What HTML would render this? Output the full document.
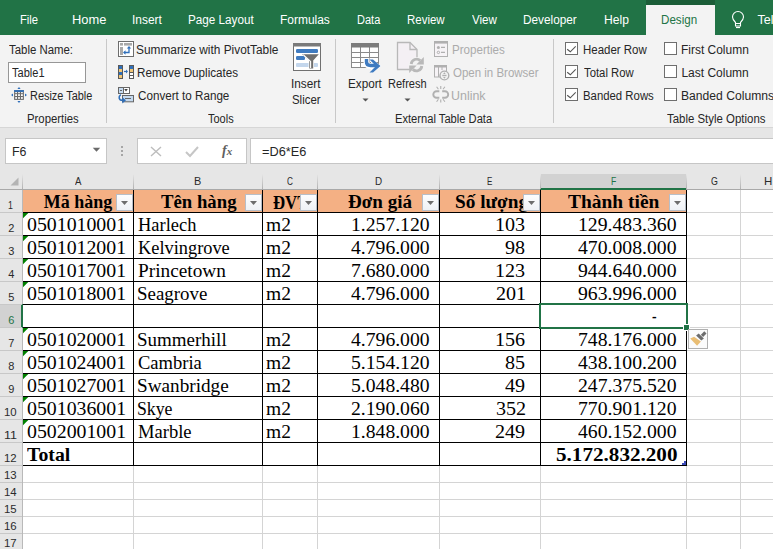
<!DOCTYPE html>
<html><head><meta charset="utf-8">
<style>
html,body{margin:0;padding:0;width:773px;height:549px;overflow:hidden;background:#fff}
body{position:relative}
.a{position:absolute;box-sizing:content-box}
.tx{position:absolute;white-space:pre;line-height:30px;transform-origin:0 0}
svg{position:absolute;overflow:visible}
</style></head><body>
<div class='a' style='left:0px;top:0px;width:773px;height:35px;background:#217346'></div>
<div class='a' style='left:646px;top:0px;width:69px;height:5px;background:#1b5d38'></div>
<div class='a' style='left:646px;top:5px;width:69px;height:30px;background:#f3f3f3'></div>
<div class='a' style='left:0px;top:35px;width:773px;height:92px;background:#f3f3f3'></div>
<div class='a' style='left:0px;top:127px;width:773px;height:1px;background:#d6d6d6'></div>
<div class='a' style='left:106px;top:39px;width:1px;height:84px;background:#c8c8c8'></div>
<div class='a' style='left:335px;top:39px;width:1px;height:84px;background:#c8c8c8'></div>
<div class='a' style='left:553px;top:39px;width:1px;height:84px;background:#c8c8c8'></div>
<div class='a' style='left:8px;top:62px;width:76px;height:19px;background:#fff;border:1px solid #979797'></div>
<div class='a' style='left:0px;top:128px;width:773px;height:46px;background:#e6e6e6'></div>
<div class='a' style='left:5px;top:138px;width:100px;height:24px;background:#fff;border:1px solid #c6c6c6'></div>
<div class='a' style='left:137px;top:138px;width:108px;height:24px;background:#fff;border:1px solid #c6c6c6'></div>
<div class='a' style='left:250px;top:138px;width:530px;height:24px;background:#fff;border:1px solid #c6c6c6'></div>
<div class='a' style='left:0px;top:174px;width:773px;height:15px;background:#e6e6e6'></div>
<div class='a' style='left:0px;top:189px;width:773px;height:1px;background:#a9a9a9'></div>
<div class='a' style='left:540px;top:174px;width:146px;height:14px;background:#d2d2d2'></div>
<div class='a' style='left:540px;top:188px;width:146px;height:2px;background:#217346'></div>
<div class='a' style='left:133px;top:174px;width:1px;height:15px;background:linear-gradient(#e6e6e6,#b0b0b0)'></div>
<div class='a' style='left:262px;top:174px;width:1px;height:15px;background:linear-gradient(#e6e6e6,#b0b0b0)'></div>
<div class='a' style='left:317px;top:174px;width:1px;height:15px;background:linear-gradient(#e6e6e6,#b0b0b0)'></div>
<div class='a' style='left:439px;top:174px;width:1px;height:15px;background:linear-gradient(#e6e6e6,#b0b0b0)'></div>
<div class='a' style='left:540px;top:174px;width:1px;height:15px;background:linear-gradient(#e6e6e6,#b0b0b0)'></div>
<div class='a' style='left:686px;top:174px;width:1px;height:15px;background:linear-gradient(#e6e6e6,#b0b0b0)'></div>
<div class='a' style='left:740px;top:174px;width:1px;height:15px;background:linear-gradient(#e6e6e6,#b0b0b0)'></div>
<div class='a' style='left:0px;top:190px;width:22px;height:359px;background:#e6e6e6'></div>
<div class='a' style='left:22px;top:190px;width:1px;height:359px;background:#b9b9b9'></div>
<div class='a' style='left:0px;top:305px;width:21px;height:22px;background:#d2d2d2'></div>
<div class='a' style='left:21px;top:304px;width:2px;height:24px;background:#217346'></div>
<div class='a' style='left:0px;top:212px;width:22px;height:1px;background:#c8c8c8'></div>
<div class='a' style='left:0px;top:235px;width:22px;height:1px;background:#c8c8c8'></div>
<div class='a' style='left:0px;top:258px;width:22px;height:1px;background:#c8c8c8'></div>
<div class='a' style='left:0px;top:281px;width:22px;height:1px;background:#c8c8c8'></div>
<div class='a' style='left:0px;top:304px;width:22px;height:1px;background:#c8c8c8'></div>
<div class='a' style='left:0px;top:327px;width:22px;height:1px;background:#c8c8c8'></div>
<div class='a' style='left:0px;top:350px;width:22px;height:1px;background:#c8c8c8'></div>
<div class='a' style='left:0px;top:373px;width:22px;height:1px;background:#c8c8c8'></div>
<div class='a' style='left:0px;top:396px;width:22px;height:1px;background:#c8c8c8'></div>
<div class='a' style='left:0px;top:419px;width:22px;height:1px;background:#c8c8c8'></div>
<div class='a' style='left:0px;top:442px;width:22px;height:1px;background:#c8c8c8'></div>
<div class='a' style='left:0px;top:465px;width:22px;height:1px;background:#c8c8c8'></div>
<div class='a' style='left:0px;top:482px;width:22px;height:1px;background:#c8c8c8'></div>
<div class='a' style='left:0px;top:499px;width:22px;height:1px;background:#c8c8c8'></div>
<div class='a' style='left:0px;top:516px;width:22px;height:1px;background:#c8c8c8'></div>
<div class='a' style='left:0px;top:533px;width:22px;height:1px;background:#c8c8c8'></div>
<div class='a' style='left:23px;top:190px;width:750px;height:359px;background:#fff'></div>
<div class='a' style='left:687px;top:212px;width:86px;height:1px;background:#d4d4d4'></div>
<div class='a' style='left:687px;top:235px;width:86px;height:1px;background:#d4d4d4'></div>
<div class='a' style='left:687px;top:258px;width:86px;height:1px;background:#d4d4d4'></div>
<div class='a' style='left:687px;top:281px;width:86px;height:1px;background:#d4d4d4'></div>
<div class='a' style='left:687px;top:304px;width:86px;height:1px;background:#d4d4d4'></div>
<div class='a' style='left:687px;top:327px;width:86px;height:1px;background:#d4d4d4'></div>
<div class='a' style='left:687px;top:350px;width:86px;height:1px;background:#d4d4d4'></div>
<div class='a' style='left:687px;top:373px;width:86px;height:1px;background:#d4d4d4'></div>
<div class='a' style='left:687px;top:396px;width:86px;height:1px;background:#d4d4d4'></div>
<div class='a' style='left:687px;top:419px;width:86px;height:1px;background:#d4d4d4'></div>
<div class='a' style='left:687px;top:442px;width:86px;height:1px;background:#d4d4d4'></div>
<div class='a' style='left:687px;top:465px;width:86px;height:1px;background:#d4d4d4'></div>
<div class='a' style='left:687px;top:482px;width:86px;height:1px;background:#d4d4d4'></div>
<div class='a' style='left:687px;top:499px;width:86px;height:1px;background:#d4d4d4'></div>
<div class='a' style='left:687px;top:516px;width:86px;height:1px;background:#d4d4d4'></div>
<div class='a' style='left:687px;top:533px;width:86px;height:1px;background:#d4d4d4'></div>
<div class='a' style='left:686px;top:465px;width:1px;height:84px;background:#d4d4d4'></div>
<div class='a' style='left:740px;top:465px;width:1px;height:84px;background:#d4d4d4'></div>
<div class='a' style='left:740px;top:190px;width:1px;height:275px;background:#d4d4d4'></div>
<div class='a' style='left:133px;top:466px;width:1px;height:83px;background:#d4d4d4'></div>
<div class='a' style='left:262px;top:466px;width:1px;height:83px;background:#d4d4d4'></div>
<div class='a' style='left:317px;top:466px;width:1px;height:83px;background:#d4d4d4'></div>
<div class='a' style='left:439px;top:466px;width:1px;height:83px;background:#d4d4d4'></div>
<div class='a' style='left:540px;top:466px;width:1px;height:83px;background:#d4d4d4'></div>
<div class='a' style='left:23px;top:482px;width:664px;height:1px;background:#d4d4d4'></div>
<div class='a' style='left:23px;top:499px;width:664px;height:1px;background:#d4d4d4'></div>
<div class='a' style='left:23px;top:516px;width:664px;height:1px;background:#d4d4d4'></div>
<div class='a' style='left:23px;top:533px;width:664px;height:1px;background:#d4d4d4'></div>
<div class='a' style='left:23px;top:190px;width:663px;height:22px;background:#f4b084'></div>
<div class='a' style='left:133px;top:190px;width:1px;height:276px;background:#000'></div>
<div class='a' style='left:262px;top:190px;width:1px;height:276px;background:#000'></div>
<div class='a' style='left:317px;top:190px;width:1px;height:276px;background:#000'></div>
<div class='a' style='left:439px;top:190px;width:1px;height:276px;background:#000'></div>
<div class='a' style='left:540px;top:190px;width:1px;height:276px;background:#000'></div>
<div class='a' style='left:686px;top:190px;width:1px;height:276px;background:#000'></div>
<div class='a' style='left:23px;top:212px;width:664px;height:1px;background:#000'></div>
<div class='a' style='left:23px;top:235px;width:664px;height:1px;background:#000'></div>
<div class='a' style='left:23px;top:258px;width:664px;height:1px;background:#000'></div>
<div class='a' style='left:23px;top:281px;width:664px;height:1px;background:#000'></div>
<div class='a' style='left:23px;top:304px;width:664px;height:1px;background:#000'></div>
<div class='a' style='left:23px;top:327px;width:664px;height:1px;background:#000'></div>
<div class='a' style='left:23px;top:350px;width:664px;height:1px;background:#000'></div>
<div class='a' style='left:23px;top:373px;width:664px;height:1px;background:#000'></div>
<div class='a' style='left:23px;top:396px;width:664px;height:1px;background:#000'></div>
<div class='a' style='left:23px;top:419px;width:664px;height:1px;background:#000'></div>
<div class='a' style='left:23px;top:442px;width:664px;height:1px;background:#000'></div>
<div class='a' style='left:23px;top:465px;width:664px;height:1px;background:#000'></div>
<div class='tx' style='left:20.00px;top:5.00px;font-family:"Liberation Sans";font-size:12.5px;font-weight:400;color:#ffffff;transform:scaleX(0.9000);'>File</div>
<div class='tx' style='left:72.27px;top:5.00px;font-family:"Liberation Sans";font-size:12.5px;font-weight:400;color:#ffffff;transform:scaleX(1.0312);'>Home</div>
<div class='tx' style='left:132.25px;top:5.00px;font-family:"Liberation Sans";font-size:12.5px;font-weight:400;color:#ffffff;transform:scaleX(0.9533);'>Insert</div>
<div class='tx' style='left:188.46px;top:5.00px;font-family:"Liberation Sans";font-size:12.5px;font-weight:400;color:#ffffff;transform:scaleX(0.9362);'>Page Layout</div>
<div class='tx' style='left:280.24px;top:5.00px;font-family:"Liberation Sans";font-size:12.5px;font-weight:400;color:#ffffff;transform:scaleX(0.9569);'>Formulas</div>
<div class='tx' style='left:356.62px;top:5.00px;font-family:"Liberation Sans";font-size:12.5px;font-weight:400;color:#ffffff;transform:scaleX(0.8808);'>Data</div>
<div class='tx' style='left:407.38px;top:5.00px;font-family:"Liberation Sans";font-size:12.5px;font-weight:400;color:#ffffff;transform:scaleX(0.9175);'>Review</div>
<div class='tx' style='left:472.00px;top:5.00px;font-family:"Liberation Sans";font-size:12.5px;font-weight:400;color:#ffffff;transform:scaleX(0.9259);'>View</div>
<div class='tx' style='left:523.16px;top:5.00px;font-family:"Liberation Sans";font-size:12.5px;font-weight:400;color:#ffffff;transform:scaleX(0.9429);'>Developer</div>
<div class='tx' style='left:603.53px;top:5.00px;font-family:"Liberation Sans";font-size:12.5px;font-weight:400;color:#ffffff;transform:scaleX(0.9680);'>Help</div>
<div class='tx' style='left:661.07px;top:5.00px;font-family:"Liberation Sans";font-size:12.5px;font-weight:400;color:#217346;transform:scaleX(0.9289);'>Design</div>
<div class='tx' style='left:757.60px;top:5.00px;font-family:"Liberation Sans";font-size:12.5px;font-weight:400;color:#ffffff;'>Tel</div>
<div class='tx' style='left:8.60px;top:34.70px;font-family:"Liberation Sans";font-size:12px;font-weight:400;color:#262626;transform:scaleX(0.9507);'>Table Name:</div>
<div class='tx' style='left:11.80px;top:57.90px;font-family:"Liberation Sans";font-size:12px;font-weight:400;color:#262626;transform:scaleX(0.9200);'>Table1</div>
<div class='tx' style='left:29.89px;top:80.90px;font-family:"Liberation Sans";font-size:12px;font-weight:400;color:#262626;transform:scaleX(0.9090);'>Resize Table</div>
<div class='tx' style='left:26.56px;top:103.80px;font-family:"Liberation Sans";font-size:12px;font-weight:400;color:#262626;transform:scaleX(0.9444);'>Properties</div>
<div class='tx' style='left:136.41px;top:35.00px;font-family:"Liberation Sans";font-size:12px;font-weight:400;color:#262626;transform:scaleX(0.9888);'>Summarize with PivotTable</div>
<div class='tx' style='left:136.63px;top:57.80px;font-family:"Liberation Sans";font-size:12px;font-weight:400;color:#262626;transform:scaleX(0.9718);'>Remove Duplicates</div>
<div class='tx' style='left:137.60px;top:80.60px;font-family:"Liberation Sans";font-size:12px;font-weight:400;color:#262626;transform:scaleX(0.9713);'>Convert to Range</div>
<div class='tx' style='left:207.60px;top:103.60px;font-family:"Liberation Sans";font-size:12px;font-weight:400;color:#262626;transform:scaleX(0.9143);'>Tools</div>
<div class='tx' style='left:291.42px;top:68.90px;font-family:"Liberation Sans";font-size:12px;font-weight:400;color:#262626;transform:scaleX(0.9828);'>Insert</div>
<div class='tx' style='left:292.35px;top:84.80px;font-family:"Liberation Sans";font-size:12px;font-weight:400;color:#262626;transform:scaleX(0.9517);'>Slicer</div>
<div class='tx' style='left:347.52px;top:68.80px;font-family:"Liberation Sans";font-size:12px;font-weight:400;color:#262626;transform:scaleX(0.9765);'>Export</div>
<div class='tx' style='left:387.68px;top:68.80px;font-family:"Liberation Sans";font-size:12px;font-weight:400;color:#262626;transform:scaleX(0.9195);'>Refresh</div>
<div class='tx' style='left:451.53px;top:35.00px;font-family:"Liberation Sans";font-size:12px;font-weight:400;color:#ababab;transform:scaleX(0.9667);'>Properties</div>
<div class='tx' style='left:452.50px;top:58.00px;font-family:"Liberation Sans";font-size:12px;font-weight:400;color:#ababab;transform:scaleX(0.9567);'>Open in Browser</div>
<div class='tx' style='left:451.46px;top:81.00px;font-family:"Liberation Sans";font-size:12px;font-weight:400;color:#ababab;transform:scaleX(1.0375);'>Unlink</div>
<div class='tx' style='left:394.67px;top:103.80px;font-family:"Liberation Sans";font-size:12px;font-weight:400;color:#262626;transform:scaleX(0.9298);'>External Table Data</div>
<div class='tx' style='left:582.84px;top:34.70px;font-family:"Liberation Sans";font-size:12px;font-weight:400;color:#262626;transform:scaleX(0.9561);'>Header Row</div>
<div class='tx' style='left:583.80px;top:58.00px;font-family:"Liberation Sans";font-size:12px;font-weight:400;color:#262626;transform:scaleX(0.9434);'>Total Row</div>
<div class='tx' style='left:582.85px;top:81.00px;font-family:"Liberation Sans";font-size:12px;font-weight:400;color:#262626;transform:scaleX(0.9473);'>Banded Rows</div>
<div class='tx' style='left:681.40px;top:34.70px;font-family:"Liberation Sans";font-size:12px;font-weight:400;color:#262626;transform:scaleX(0.9970);'>First Column</div>
<div class='tx' style='left:681.40px;top:58.00px;font-family:"Liberation Sans";font-size:12px;font-weight:400;color:#262626;'>Last Column</div>
<div class='tx' style='left:681.39px;top:81.00px;font-family:"Liberation Sans";font-size:12px;font-weight:400;color:#262626;transform:scaleX(1.0110);'>Banded Columns</div>
<div class='tx' style='left:667.30px;top:103.80px;font-family:"Liberation Sans";font-size:12px;font-weight:400;color:#262626;transform:scaleX(0.9524);'>Table Style Options</div>
<div class='tx' style='left:11.57px;top:136.80px;font-family:"Liberation Sans";font-size:12px;font-weight:400;color:#262626;transform:scaleX(1.0308);'>F6</div>
<div class='tx' style='left:262.10px;top:136.80px;font-family:"Liberation Sans";font-size:12px;font-weight:400;color:#262626;transform:scaleX(1.0610);'>=D6*E6</div>
<div class='tx' style='left:75.20px;top:165.70px;font-family:"Liberation Sans";font-size:11.5px;font-weight:400;color:#2b2b2b;transform:scaleX(0.8375);'>A</div>
<div class='tx' style='left:194.45px;top:165.70px;font-family:"Liberation Sans";font-size:11.5px;font-weight:400;color:#2b2b2b;transform:scaleX(0.9500);'>B</div>
<div class='tx' style='left:287.30px;top:165.70px;font-family:"Liberation Sans";font-size:11.5px;font-weight:400;color:#2b2b2b;transform:scaleX(0.7125);'>C</div>
<div class='tx' style='left:375.14px;top:165.70px;font-family:"Liberation Sans";font-size:11.5px;font-weight:400;color:#2b2b2b;transform:scaleX(0.8571);'>D</div>
<div class='tx' style='left:487.20px;top:165.70px;font-family:"Liberation Sans";font-size:11.5px;font-weight:400;color:#2b2b2b;transform:scaleX(0.7000);'>E</div>
<div class='tx' style='left:710.70px;top:165.70px;font-family:"Liberation Sans";font-size:11.5px;font-weight:400;color:#2b2b2b;transform:scaleX(0.7667);'>G</div>
<div class='tx' style='left:610.75px;top:165.70px;font-family:"Liberation Sans";font-size:11.5px;font-weight:400;color:#217346;transform:scaleX(0.7500);'>F</div>
<div class='tx' style='left:764.00px;top:165.70px;font-family:"Liberation Sans";font-size:11.5px;font-weight:400;color:#2b2b2b;'>H</div>
<div class='tx' style='left:8.30px;top:189.60px;font-family:"Liberation Sans";font-size:11px;font-weight:400;color:#2b2b2b;transform:scaleX(0.8000);'>1</div>
<div class='tx' style='left:8.20px;top:212.60px;font-family:"Liberation Sans";font-size:11px;font-weight:400;color:#2b2b2b;'>2</div>
<div class='tx' style='left:8.20px;top:235.60px;font-family:"Liberation Sans";font-size:11px;font-weight:400;color:#2b2b2b;'>3</div>
<div class='tx' style='left:8.20px;top:258.60px;font-family:"Liberation Sans";font-size:11px;font-weight:400;color:#2b2b2b;'>4</div>
<div class='tx' style='left:8.20px;top:281.60px;font-family:"Liberation Sans";font-size:11px;font-weight:400;color:#2b2b2b;'>5</div>
<div class='tx' style='left:8.20px;top:304.60px;font-family:"Liberation Sans";font-size:11px;font-weight:400;color:#217346;'>6</div>
<div class='tx' style='left:8.20px;top:327.60px;font-family:"Liberation Sans";font-size:11px;font-weight:400;color:#2b2b2b;'>7</div>
<div class='tx' style='left:8.20px;top:350.60px;font-family:"Liberation Sans";font-size:11px;font-weight:400;color:#2b2b2b;'>8</div>
<div class='tx' style='left:8.20px;top:373.60px;font-family:"Liberation Sans";font-size:11px;font-weight:400;color:#2b2b2b;'>9</div>
<div class='tx' style='left:4.46px;top:396.60px;font-family:"Liberation Sans";font-size:11px;font-weight:400;color:#2b2b2b;transform:scaleX(1.0364);'>10</div>
<div class='tx' style='left:4.36px;top:419.60px;font-family:"Liberation Sans";font-size:11px;font-weight:400;color:#2b2b2b;transform:scaleX(1.1400);'>11</div>
<div class='tx' style='left:4.46px;top:442.60px;font-family:"Liberation Sans";font-size:11px;font-weight:400;color:#2b2b2b;transform:scaleX(1.0364);'>12</div>
<div class='tx' style='left:4.46px;top:459.70px;font-family:"Liberation Sans";font-size:11px;font-weight:400;color:#2b2b2b;transform:scaleX(1.0364);'>13</div>
<div class='tx' style='left:4.46px;top:476.70px;font-family:"Liberation Sans";font-size:11px;font-weight:400;color:#2b2b2b;transform:scaleX(1.0364);'>14</div>
<div class='tx' style='left:4.46px;top:493.70px;font-family:"Liberation Sans";font-size:11px;font-weight:400;color:#2b2b2b;transform:scaleX(1.0364);'>15</div>
<div class='tx' style='left:4.46px;top:510.70px;font-family:"Liberation Sans";font-size:11px;font-weight:400;color:#2b2b2b;transform:scaleX(1.0364);'>16</div>
<div class='tx' style='left:4.46px;top:527.70px;font-family:"Liberation Sans";font-size:11px;font-weight:400;color:#2b2b2b;transform:scaleX(1.0364);'>17</div>
<div class='tx' style='left:43.70px;top:186.90px;font-family:"Liberation Serif";font-size:18px;font-weight:700;color:#000;'>Mã hàng</div>
<div class='tx' style='left:160.70px;top:186.90px;font-family:"Liberation Serif";font-size:18px;font-weight:700;color:#000;transform:scaleX(1.0411);'>Tên hàng</div>
<div class='tx' style='left:272.90px;top:187.50px;font-family:"Liberation Serif";font-size:18px;font-weight:700;color:#000;transform:scaleX(0.93);'>ĐVT</div>
<div class='tx' style='left:348.40px;top:186.90px;font-family:"Liberation Serif";font-size:18px;font-weight:700;color:#000;transform:scaleX(1.0583);'>Đơn giá</div>
<div class='tx' style='left:454.50px;top:186.90px;font-family:"Liberation Serif";font-size:18px;font-weight:700;color:#000;transform:scaleX(1.07);'>Số lượng</div>
<div class='tx' style='left:567.80px;top:186.90px;font-family:"Liberation Serif";font-size:18px;font-weight:700;color:#000;transform:scaleX(1.0810);'>Thành tiền</div>
<div class='tx' style='left:26.50px;top:209.80px;font-family:"Liberation Serif";font-size:18px;font-weight:400;color:#000;transform:scaleX(1.1011);'>0501010001</div>
<div class='tx' style='left:137.70px;top:209.80px;font-family:"Liberation Serif";font-size:18px;font-weight:400;color:#000;transform:scaleX(1.0246);'>Harlech</div>
<div class='tx' style='left:266.30px;top:209.80px;font-family:"Liberation Serif";font-size:18px;font-weight:400;color:#000;transform:scaleX(1.0818);'>m2</div>
<div class='tx' style='left:350.72px;top:209.80px;font-family:"Liberation Serif";font-size:18px;font-weight:400;color:#000;transform:scaleX(1.0914);'>1.257.120</div>
<div class='tx' style='left:494.87px;top:209.80px;font-family:"Liberation Serif";font-size:18px;font-weight:400;color:#000;transform:scaleX(1.1160);'>103</div>
<div class='tx' style='left:577.91px;top:209.80px;font-family:"Liberation Serif";font-size:18px;font-weight:400;color:#000;transform:scaleX(1.0943);'>129.483.360</div>
<div class='tx' style='left:26.50px;top:232.80px;font-family:"Liberation Serif";font-size:18px;font-weight:400;color:#000;transform:scaleX(1.1011);'>0501012001</div>
<div class='tx' style='left:137.70px;top:232.80px;font-family:"Liberation Serif";font-size:18px;font-weight:400;color:#000;transform:scaleX(1.0200);'>Kelvingrove</div>
<div class='tx' style='left:266.30px;top:232.80px;font-family:"Liberation Serif";font-size:18px;font-weight:400;color:#000;transform:scaleX(1.0818);'>m2</div>
<div class='tx' style='left:350.72px;top:232.80px;font-family:"Liberation Serif";font-size:18px;font-weight:400;color:#000;transform:scaleX(1.0914);'>4.796.000</div>
<div class='tx' style='left:504.91px;top:232.80px;font-family:"Liberation Serif";font-size:18px;font-weight:400;color:#000;transform:scaleX(1.1160);'>98</div>
<div class='tx' style='left:577.91px;top:232.80px;font-family:"Liberation Serif";font-size:18px;font-weight:400;color:#000;transform:scaleX(1.0943);'>470.008.000</div>
<div class='tx' style='left:26.50px;top:255.80px;font-family:"Liberation Serif";font-size:18px;font-weight:400;color:#000;transform:scaleX(1.1011);'>0501017001</div>
<div class='tx' style='left:137.70px;top:255.80px;font-family:"Liberation Serif";font-size:18px;font-weight:400;color:#000;transform:scaleX(1.0720);'>Princetown</div>
<div class='tx' style='left:266.30px;top:255.80px;font-family:"Liberation Serif";font-size:18px;font-weight:400;color:#000;transform:scaleX(1.0818);'>m2</div>
<div class='tx' style='left:350.72px;top:255.80px;font-family:"Liberation Serif";font-size:18px;font-weight:400;color:#000;transform:scaleX(1.0914);'>7.680.000</div>
<div class='tx' style='left:494.87px;top:255.80px;font-family:"Liberation Serif";font-size:18px;font-weight:400;color:#000;transform:scaleX(1.1160);'>123</div>
<div class='tx' style='left:577.91px;top:255.80px;font-family:"Liberation Serif";font-size:18px;font-weight:400;color:#000;transform:scaleX(1.0943);'>944.640.000</div>
<div class='tx' style='left:26.50px;top:278.80px;font-family:"Liberation Serif";font-size:18px;font-weight:400;color:#000;transform:scaleX(1.1011);'>0501018001</div>
<div class='tx' style='left:136.65px;top:278.80px;font-family:"Liberation Serif";font-size:18px;font-weight:400;color:#000;transform:scaleX(1.0500);'>Seagrove</div>
<div class='tx' style='left:266.30px;top:278.80px;font-family:"Liberation Serif";font-size:18px;font-weight:400;color:#000;transform:scaleX(1.0818);'>m2</div>
<div class='tx' style='left:350.72px;top:278.80px;font-family:"Liberation Serif";font-size:18px;font-weight:400;color:#000;transform:scaleX(1.0914);'>4.796.000</div>
<div class='tx' style='left:495.98px;top:278.80px;font-family:"Liberation Serif";font-size:18px;font-weight:400;color:#000;transform:scaleX(1.1160);'>201</div>
<div class='tx' style='left:577.91px;top:278.80px;font-family:"Liberation Serif";font-size:18px;font-weight:400;color:#000;transform:scaleX(1.0943);'>963.996.000</div>
<div class='tx' style='left:652.20px;top:301.30px;font-family:"Liberation Serif";font-size:18px;font-weight:400;color:#000;transform:scaleX(0.7667);'>-</div>
<div class='tx' style='left:26.50px;top:324.80px;font-family:"Liberation Serif";font-size:18px;font-weight:400;color:#000;transform:scaleX(1.1011);'>0501020001</div>
<div class='tx' style='left:136.65px;top:324.80px;font-family:"Liberation Serif";font-size:18px;font-weight:400;color:#000;transform:scaleX(1.0548);'>Summerhill</div>
<div class='tx' style='left:266.30px;top:324.80px;font-family:"Liberation Serif";font-size:18px;font-weight:400;color:#000;transform:scaleX(1.0818);'>m2</div>
<div class='tx' style='left:350.72px;top:324.80px;font-family:"Liberation Serif";font-size:18px;font-weight:400;color:#000;transform:scaleX(1.0914);'>4.796.000</div>
<div class='tx' style='left:494.87px;top:324.80px;font-family:"Liberation Serif";font-size:18px;font-weight:400;color:#000;transform:scaleX(1.1160);'>156</div>
<div class='tx' style='left:577.91px;top:324.80px;font-family:"Liberation Serif";font-size:18px;font-weight:400;color:#000;transform:scaleX(1.0943);'>748.176.000</div>
<div class='tx' style='left:26.50px;top:347.80px;font-family:"Liberation Serif";font-size:18px;font-weight:400;color:#000;transform:scaleX(1.1011);'>0501024001</div>
<div class='tx' style='left:137.70px;top:347.80px;font-family:"Liberation Serif";font-size:18px;font-weight:400;color:#000;transform:scaleX(1.0290);'>Cambria</div>
<div class='tx' style='left:266.30px;top:347.80px;font-family:"Liberation Serif";font-size:18px;font-weight:400;color:#000;transform:scaleX(1.0818);'>m2</div>
<div class='tx' style='left:350.72px;top:347.80px;font-family:"Liberation Serif";font-size:18px;font-weight:400;color:#000;transform:scaleX(1.0914);'>5.154.120</div>
<div class='tx' style='left:504.91px;top:347.80px;font-family:"Liberation Serif";font-size:18px;font-weight:400;color:#000;transform:scaleX(1.1160);'>85</div>
<div class='tx' style='left:577.91px;top:347.80px;font-family:"Liberation Serif";font-size:18px;font-weight:400;color:#000;transform:scaleX(1.0943);'>438.100.200</div>
<div class='tx' style='left:26.50px;top:370.80px;font-family:"Liberation Serif";font-size:18px;font-weight:400;color:#000;transform:scaleX(1.1011);'>0501027001</div>
<div class='tx' style='left:136.63px;top:370.80px;font-family:"Liberation Serif";font-size:18px;font-weight:400;color:#000;transform:scaleX(1.0671);'>Swanbridge</div>
<div class='tx' style='left:266.30px;top:370.80px;font-family:"Liberation Serif";font-size:18px;font-weight:400;color:#000;transform:scaleX(1.0818);'>m2</div>
<div class='tx' style='left:350.72px;top:370.80px;font-family:"Liberation Serif";font-size:18px;font-weight:400;color:#000;transform:scaleX(1.0914);'>5.048.480</div>
<div class='tx' style='left:504.91px;top:370.80px;font-family:"Liberation Serif";font-size:18px;font-weight:400;color:#000;transform:scaleX(1.1160);'>49</div>
<div class='tx' style='left:577.91px;top:370.80px;font-family:"Liberation Serif";font-size:18px;font-weight:400;color:#000;transform:scaleX(1.0943);'>247.375.520</div>
<div class='tx' style='left:26.50px;top:393.80px;font-family:"Liberation Serif";font-size:18px;font-weight:400;color:#000;transform:scaleX(1.1011);'>0501036001</div>
<div class='tx' style='left:136.71px;top:393.80px;font-family:"Liberation Serif";font-size:18px;font-weight:400;color:#000;transform:scaleX(0.9857);'>Skye</div>
<div class='tx' style='left:266.30px;top:393.80px;font-family:"Liberation Serif";font-size:18px;font-weight:400;color:#000;transform:scaleX(1.0818);'>m2</div>
<div class='tx' style='left:350.72px;top:393.80px;font-family:"Liberation Serif";font-size:18px;font-weight:400;color:#000;transform:scaleX(1.0914);'>2.190.060</div>
<div class='tx' style='left:495.98px;top:393.80px;font-family:"Liberation Serif";font-size:18px;font-weight:400;color:#000;transform:scaleX(1.1160);'>352</div>
<div class='tx' style='left:577.91px;top:393.80px;font-family:"Liberation Serif";font-size:18px;font-weight:400;color:#000;transform:scaleX(1.0943);'>770.901.120</div>
<div class='tx' style='left:26.50px;top:416.80px;font-family:"Liberation Serif";font-size:18px;font-weight:400;color:#000;transform:scaleX(1.1011);'>0502001001</div>
<div class='tx' style='left:137.70px;top:416.80px;font-family:"Liberation Serif";font-size:18px;font-weight:400;color:#000;transform:scaleX(1.0308);'>Marble</div>
<div class='tx' style='left:266.30px;top:416.80px;font-family:"Liberation Serif";font-size:18px;font-weight:400;color:#000;transform:scaleX(1.0818);'>m2</div>
<div class='tx' style='left:350.72px;top:416.80px;font-family:"Liberation Serif";font-size:18px;font-weight:400;color:#000;transform:scaleX(1.0914);'>1.848.000</div>
<div class='tx' style='left:494.87px;top:416.80px;font-family:"Liberation Serif";font-size:18px;font-weight:400;color:#000;transform:scaleX(1.1160);'>249</div>
<div class='tx' style='left:577.91px;top:416.80px;font-family:"Liberation Serif";font-size:18px;font-weight:400;color:#000;transform:scaleX(1.0943);'>460.152.000</div>
<div class='tx' style='left:27.10px;top:439.60px;font-family:"Liberation Serif";font-size:18px;font-weight:700;color:#000;transform:scaleX(1.1000);'>Total</div>
<div class='tx' style='left:555.50px;top:439.60px;font-family:"Liberation Serif";font-size:18px;font-weight:700;color:#000;transform:scaleX(1.1738);'>5.172.832.200</div>
<svg style='left:730px;top:10px' width='16' height='20' viewBox='0 0 16 20'><path d='M5.5 12.5 C3 10 2.5 8.5 2.5 7 A5.5 5.5 0 0 1 13.5 7 C13.5 8.5 13 10 10.5 12.5 V16 H5.5 Z' fill='none' stroke='#fff' stroke-width='1.1'/><path d='M5.5 13.5 H10.5' stroke='#fff' stroke-width='1'/><path d='M6 17.5 H10' stroke='#fff' stroke-width='1.2'/></svg>
<svg style='left:10px;top:86px' width='18' height='18' viewBox='0 0 18 18'><rect x='4.1' y='4.1' width='9.8' height='9.8' fill='#6b6b6b'/><rect x='4.1' y='4.1' width='9.8' height='1.8' fill='#2f6fba'/><rect x='5.2' y='6.1' width='1.8' height='1.1' fill='#fff'/><rect x='5.2' y='8.2' width='1.8' height='1.8' fill='#fff'/><rect x='5.2' y='11.1' width='1.8' height='1.7' fill='#fff'/><rect x='8.1' y='6.1' width='1.8' height='1.1' fill='#fff'/><rect x='8.1' y='8.2' width='1.8' height='1.8' fill='#fff'/><rect x='8.1' y='11.1' width='1.8' height='1.7' fill='#fff'/><rect x='11.0' y='6.1' width='1.8' height='1.1' fill='#fff'/><rect x='11.0' y='8.2' width='1.8' height='1.8' fill='#fff'/><rect x='11.0' y='11.1' width='1.8' height='1.7' fill='#fff'/><path d='M9 1 L7.4 3 H10.6 Z M9 17 L7.4 15 H10.6 Z M1 9 L3 7.4 V10.6 Z M17 9 L15 7.4 V10.6 Z' fill='#2f6fba'/></svg>
<svg style='left:118px;top:41px' width='16' height='16' viewBox='0 0 16 16'><rect x='0.5' y='0.5' width='15' height='15' fill='#fff' stroke='#6d6d6d'/><rect x='2' y='2' width='3' height='2.6' fill='#a9a9a9'/><rect x='6' y='2' width='8' height='2.6' fill='#a9a9a9'/><rect x='2' y='6' width='3' height='8' fill='#a9a9a9'/><path d='M6.5 11.5 H11 V6.5' fill='none' stroke='#2f6fba' stroke-width='1.3'/><path d='M5 11.5 L7.5 9.3 V13.7 Z M11 5 L8.8 7.5 H13.2 Z' fill='#2f6fba'/></svg>
<svg style='left:118px;top:65px' width='16' height='14' viewBox='0 0 16 14'><rect x='0.5' y='0.5' width='4' height='13' fill='#fff' stroke='#595959'/><rect x='1' y='1' width='3' height='3' fill='#2f6fba'/><rect x='1' y='4' width='3' height='3' fill='#f2c675'/><rect x='1' y='7' width='3' height='3' fill='#2f6fba'/><rect x='1' y='10' width='3' height='3' fill='#f2c675'/><g transform='translate(11,0)'><rect x='0.5' y='0.5' width='4' height='13' fill='#fff' stroke='#595959'/><rect x='1' y='1' width='3' height='3' fill='#2f6fba'/><rect x='1' y='4' width='3' height='3' fill='#f2c675'/><rect x='1' y='7' width='3' height='3' fill='#fff'/><rect x='1' y='10' width='3' height='3' fill='#fff'/><path d='M1 7.5 H4 M1 10.5 H4' stroke='#595959'/></g><path d='M6 6.5 H9' stroke='#2f6fba' stroke-width='1.2'/><path d='M10 6.5 L8 4.6 V8.4 Z' fill='#2f6fba'/></svg>
<svg style='left:118px;top:87px' width='16' height='16' viewBox='0 0 16 16'><rect x='0.5' y='0.5' width='11' height='6' fill='#fff' stroke='#666'/><rect x='1' y='1' width='4.5' height='5' fill='#c5daf0'/><path d='M5.5 1 V6' stroke='#666'/><path d='M2 3.5 H4' stroke='#666'/><path d='M6.2 2 H9.8 L8 4.5 Z' fill='#444'/><rect x='4.5' y='8.5' width='11' height='6.3' fill='#c5daf0' stroke='#666'/><path d='M7 11.5 H13' stroke='#666'/><path d='M2.8 7.6 C0.2 9.3 0.6 13.3 4.5 13.3' fill='none' stroke='#2f6fba' stroke-width='1.6'/><path d='M8 13.3 L4.3 10.2 V16.4 Z' fill='#2f6fba'/></svg>
<svg style='left:293px;top:43px' width='28' height='28' viewBox='0 0 28 28'><rect x='0.5' y='0.5' width='27' height='27' fill='#fff' stroke='#707070'/><rect x='0' y='0' width='28' height='3.5' fill='#7a7a7a'/><rect x='3' y='6' width='22' height='4' rx='1.3' fill='#3f7bc0'/><rect x='3' y='13' width='9' height='4' rx='1.3' fill='#3f7bc0'/><rect x='3' y='20' width='22' height='4' rx='1' fill='#c3d6ec'/><path d='M7.8 10.3 H26.5 L21 17.8 V26.3 H15.5 V17.8 Z' fill='#fff'/><path d='M9 11.2 H25.8 L20.2 17.6 V25.5 H16.3 V17.6 Z' fill='#6f6f6f'/><path d='M10.2 11.6 L17.6 18.4 V25' fill='none' stroke='#fff' stroke-width='1.1'/></svg>
<svg style='left:351px;top:43px' width='32' height='30' viewBox='0 0 32 30'><rect x='0.5' y='0.5' width='27' height='24' fill='#fff'/><path d='M0.5 4 V24.5' stroke='#8a8a8a'/><path d='M9.5 4 V24.5' stroke='#8a8a8a'/><path d='M18.5 4 V24.5' stroke='#8a8a8a'/><path d='M27.5 4 V24.5' stroke='#8a8a8a'/><path d='M0 9.5 H28' stroke='#8a8a8a'/><path d='M0 14.5 H28' stroke='#8a8a8a'/><path d='M0 19.5 H28' stroke='#8a8a8a'/><path d='M0 24.5 H28' stroke='#8a8a8a'/><rect x='0' y='0' width='28' height='4.5' fill='#7d7d7d'/><path d='M15.5 15 V19 C15.5 22 17 23 19.5 23 H26' fill='none' stroke='#fff' stroke-width='6'/><path d='M20 15.5 L30.5 23 L20 30.5 Z' fill='#fff'/><path d='M15.5 16 V19 C15.5 21.5 17 22.5 19.5 22.5 H25' fill='none' stroke='#3f7bc0' stroke-width='3.4'/><path d='M22 16.5 L29.5 23 L22 29.5 H18.5 L25 23 L18.5 16.5 Z' fill='#3f7bc0'/></svg>
<svg style='left:396px;top:41px' width='30' height='32' viewBox='0 0 30 32'><path d='M1.5 1.5 H14 L21 8.5 V28.5 H1.5 Z' fill='#f4f0f4' stroke='#b8b8b8' stroke-width='1.3'/><path d='M14 1.5 V8.5 H21' fill='none' stroke='#b8b8b8' stroke-width='1.3'/><circle cx='20.5' cy='24' r='8' fill='#f3f3f3'/><path d='M15.2 23 A5.4 5.4 0 0 1 24.2 19.6' fill='none' stroke='#b9b9b9' stroke-width='2.8'/><path d='M25.8 25 A5.4 5.4 0 0 1 16.8 28.4' fill='none' stroke='#b9b9b9' stroke-width='2.8'/><path d='M27.8 16 V23.5 H20.3 Z' fill='#b9b9b9'/><path d='M13.2 32 V24.5 H20.7 Z' fill='#b9b9b9'/></svg>
<svg style='left:434px;top:41px' width='15' height='16' viewBox='0 0 15 16'><rect x='0.5' y='0.5' width='13' height='15' fill='#f6f3f6' stroke='#b0b0b0'/><rect x='0' y='0' width='14' height='2.6' fill='#b0b0b0'/><circle cx='4.4' cy='6.4' r='1.5' fill='#b0b0b0'/><circle cx='4.4' cy='11.4' r='1.2' fill='none' stroke='#b0b0b0'/><path d='M7 6.4 H11 M7 11.4 H11' stroke='#b0b0b0' stroke-width='1.2'/></svg>
<svg style='left:434px;top:65px' width='16' height='16' viewBox='0 0 16 16'><rect x='0.5' y='0.5' width='12' height='11.5' fill='#f6f3f6' stroke='#b0b0b0'/><rect x='0' y='0' width='13' height='2.5' fill='#b0b0b0'/><path d='M4.5 2 V12 M8 2 V5' stroke='#b0b0b0'/><circle cx='10.4' cy='10.5' r='4.4' fill='#f3f3f3' stroke='#b0b0b0' stroke-width='1.4'/><path d='M8.3 10.5 H12.5' stroke='#b0b0b0' stroke-width='1.4'/><path d='M10.4 7.3 L9.1 8.9 H11.7 Z M10.4 13.7 L9.1 12.1 H11.7 Z' fill='#b0b0b0'/></svg>
<svg style='left:433px;top:86px' width='16' height='16' viewBox='0 0 16 16'><path d='M6.3 5.2 H3.6 A3.3 3.3 0 0 0 3.6 11.8 H6.3 M9.2 5.2 H11.9 A3.3 3.3 0 0 1 11.9 11.8 H9.2' fill='none' stroke='#b0b0b0' stroke-width='1.9'/><path d='M3.6 0.8 L5.4 3.3 M7.75 0 V3 M11.9 0.8 L10.1 3.3 M3.6 15.7 L5.4 13.2 M7.75 16.5 V13.5 M11.9 15.7 L10.1 13.2' stroke='#b0b0b0' stroke-width='1.1'/></svg>
<svg style='left:362px;top:98px' width='8' height='5' viewBox='0 0 8 5'><path d='M0.5 0.5 H6.5 L3.5 3.5 Z' fill='#555'/></svg>
<svg style='left:404px;top:98px' width='8' height='5' viewBox='0 0 8 5'><path d='M0.5 0.5 H6.5 L3.5 3.5 Z' fill='#555'/></svg>
<svg style='left:565px;top:42px' width='13' height='13' viewBox='0 0 13 13'><rect x='0.5' y='0.5' width='12' height='12' fill='#fff' stroke='#6e6e6e'/><path d='M2.2 7.3 L5.3 9.8 L10.7 4.4' fill='none' stroke='#555' stroke-width='1.1'/></svg>
<svg style='left:565px;top:65px' width='13' height='13' viewBox='0 0 13 13'><rect x='0.5' y='0.5' width='12' height='12' fill='#fff' stroke='#6e6e6e'/><path d='M2.2 7.3 L5.3 9.8 L10.7 4.4' fill='none' stroke='#555' stroke-width='1.1'/></svg>
<svg style='left:565px;top:88px' width='13' height='13' viewBox='0 0 13 13'><rect x='0.5' y='0.5' width='12' height='12' fill='#fff' stroke='#6e6e6e'/><path d='M2.2 7.3 L5.3 9.8 L10.7 4.4' fill='none' stroke='#555' stroke-width='1.1'/></svg>
<svg style='left:664px;top:42px' width='13' height='13' viewBox='0 0 13 13'><rect x='0.5' y='0.5' width='12' height='12' fill='#fff' stroke='#6e6e6e'/></svg>
<svg style='left:664px;top:65px' width='13' height='13' viewBox='0 0 13 13'><rect x='0.5' y='0.5' width='12' height='12' fill='#fff' stroke='#6e6e6e'/></svg>
<svg style='left:664px;top:88px' width='13' height='13' viewBox='0 0 13 13'><rect x='0.5' y='0.5' width='12' height='12' fill='#fff' stroke='#6e6e6e'/></svg>
<svg style='left:92px;top:147px' width='9' height='6' viewBox='0 0 9 6'><path d='M0.8 0.8 H8.2 L4.5 4.8 Z' fill='#6a6a6a'/></svg>
<svg style='left:121px;top:146px' width='2' height='10' viewBox='0 0 2 10'><rect x='0' y='0' width='2' height='2' fill='#a6a6a6'/><rect x='0' y='4' width='2' height='2' fill='#a6a6a6'/><rect x='0' y='8' width='2' height='2' fill='#a6a6a6'/></svg>
<svg style='left:150px;top:146px' width='12' height='11' viewBox='0 0 12 11'><path d='M1 1 L11 10 M11 1 L1 10' stroke='#bdbdbd' stroke-width='1.4'/></svg>
<svg style='left:185px;top:145px' width='14' height='13' viewBox='0 0 14 13'><path d='M1 7 L5 11 L13 2' fill='none' stroke='#c6c6c6' stroke-width='2'/></svg>
<div class='tx' style='left:222px;top:136px;line-height:30px;font-family:"Liberation Serif";font-style:italic;font-weight:700;font-size:14px;color:#5f5f5f'>f<span style='font-size:11px'>x</span></div>
<svg style='left:11px;top:177px' width='8' height='9' viewBox='0 0 8 9'><path d='M7.5 0.5 V8.5 H-0.5 Z' fill='#b4b4b4'/></svg>
<svg style='left:116px;top:194px' width='17' height='17' viewBox='0 0 17 17'><defs><linearGradient id='gg0' x1='0' y1='0' x2='0' y2='1'><stop offset='0' stop-color='#fdfdfe'/><stop offset='1' stop-color='#eef1f5'/></linearGradient></defs><rect x='0.5' y='0.5' width='16' height='16' fill='url(#gg0)' stroke='#b7bec8'/><path d='M5 7 H12 L8.5 11 Z' fill='#6d6d6d'/></svg>
<svg style='left:245px;top:194px' width='17' height='17' viewBox='0 0 17 17'><defs><linearGradient id='gg1' x1='0' y1='0' x2='0' y2='1'><stop offset='0' stop-color='#fdfdfe'/><stop offset='1' stop-color='#eef1f5'/></linearGradient></defs><rect x='0.5' y='0.5' width='16' height='16' fill='url(#gg1)' stroke='#b7bec8'/><path d='M5 7 H12 L8.5 11 Z' fill='#6d6d6d'/></svg>
<svg style='left:300px;top:194px' width='17' height='17' viewBox='0 0 17 17'><defs><linearGradient id='gg2' x1='0' y1='0' x2='0' y2='1'><stop offset='0' stop-color='#fdfdfe'/><stop offset='1' stop-color='#eef1f5'/></linearGradient></defs><rect x='0.5' y='0.5' width='16' height='16' fill='url(#gg2)' stroke='#b7bec8'/><path d='M5 7 H12 L8.5 11 Z' fill='#6d6d6d'/></svg>
<svg style='left:422px;top:194px' width='17' height='17' viewBox='0 0 17 17'><defs><linearGradient id='gg3' x1='0' y1='0' x2='0' y2='1'><stop offset='0' stop-color='#fdfdfe'/><stop offset='1' stop-color='#eef1f5'/></linearGradient></defs><rect x='0.5' y='0.5' width='16' height='16' fill='url(#gg3)' stroke='#b7bec8'/><path d='M5 7 H12 L8.5 11 Z' fill='#6d6d6d'/></svg>
<svg style='left:523px;top:194px' width='17' height='17' viewBox='0 0 17 17'><defs><linearGradient id='gg4' x1='0' y1='0' x2='0' y2='1'><stop offset='0' stop-color='#fdfdfe'/><stop offset='1' stop-color='#eef1f5'/></linearGradient></defs><rect x='0.5' y='0.5' width='16' height='16' fill='url(#gg4)' stroke='#b7bec8'/><path d='M5 7 H12 L8.5 11 Z' fill='#6d6d6d'/></svg>
<svg style='left:669px;top:194px' width='17' height='17' viewBox='0 0 17 17'><defs><linearGradient id='gg5' x1='0' y1='0' x2='0' y2='1'><stop offset='0' stop-color='#fdfdfe'/><stop offset='1' stop-color='#eef1f5'/></linearGradient></defs><rect x='0.5' y='0.5' width='16' height='16' fill='url(#gg5)' stroke='#b7bec8'/><path d='M5 7 H12 L8.5 11 Z' fill='#6d6d6d'/></svg>
<svg style='left:23px;top:213px' width='6' height='6' viewBox='0 0 6 6'><path d='M0 0 H5.3 L0 5.3 Z' fill='#008000'/></svg>
<svg style='left:23px;top:236px' width='6' height='6' viewBox='0 0 6 6'><path d='M0 0 H5.3 L0 5.3 Z' fill='#008000'/></svg>
<svg style='left:23px;top:259px' width='6' height='6' viewBox='0 0 6 6'><path d='M0 0 H5.3 L0 5.3 Z' fill='#008000'/></svg>
<svg style='left:23px;top:282px' width='6' height='6' viewBox='0 0 6 6'><path d='M0 0 H5.3 L0 5.3 Z' fill='#008000'/></svg>
<svg style='left:23px;top:328px' width='6' height='6' viewBox='0 0 6 6'><path d='M0 0 H5.3 L0 5.3 Z' fill='#008000'/></svg>
<svg style='left:23px;top:351px' width='6' height='6' viewBox='0 0 6 6'><path d='M0 0 H5.3 L0 5.3 Z' fill='#008000'/></svg>
<svg style='left:23px;top:374px' width='6' height='6' viewBox='0 0 6 6'><path d='M0 0 H5.3 L0 5.3 Z' fill='#008000'/></svg>
<svg style='left:23px;top:397px' width='6' height='6' viewBox='0 0 6 6'><path d='M0 0 H5.3 L0 5.3 Z' fill='#008000'/></svg>
<svg style='left:23px;top:420px' width='6' height='6' viewBox='0 0 6 6'><path d='M0 0 H5.3 L0 5.3 Z' fill='#008000'/></svg>
<div class='a' style='left:539px;top:303px;width:145px;height:22px;border:2px solid #217346;border-right-width:0;border-bottom-width:0'></div>
<div class='a' style='left:686px;top:303px;width:2px;height:22px;background:#217346'></div>
<div class='a' style='left:539px;top:327px;width:144px;height:2px;background:#217346'></div>
<div class='a' style='left:683px;top:324px;width:7px;height:7px;background:#fff'></div>
<div class='a' style='left:684px;top:325px;width:5px;height:5px;background:#217346'></div>
<svg style='left:688px;top:329px' width='21' height='20' viewBox='0 0 21 20'><rect x='0.5' y='0.5' width='19' height='19' fill='#fbfbfb' stroke='#b0b0b0'/><path d='M16.3 2.3 L18.5 4.5 L15.1 7.9 L12.9 5.7 Z' fill='#6d6d6d'/><path d='M10.7 4.6 L15.9 9.4 L13.3 11.6 L8.1 6.5 Z' fill='#6d6d6d'/><path d='M2.2 9.4 L6.1 7.8 L12.9 12.4 L9.1 16.8 Z' fill='#e9bd73'/></svg>
<svg style='left:682px;top:461px' width='4' height='4' viewBox='0 0 4 4'><path d='M0 2 H2 V0 H4 V4 H0 Z' fill='#3b4ab8'/></svg>
<div class='a' style='left:22px;top:174px;width:1px;height:15px;background:linear-gradient(#e6e6e6,#b0b0b0)'></div>
</body></html>
